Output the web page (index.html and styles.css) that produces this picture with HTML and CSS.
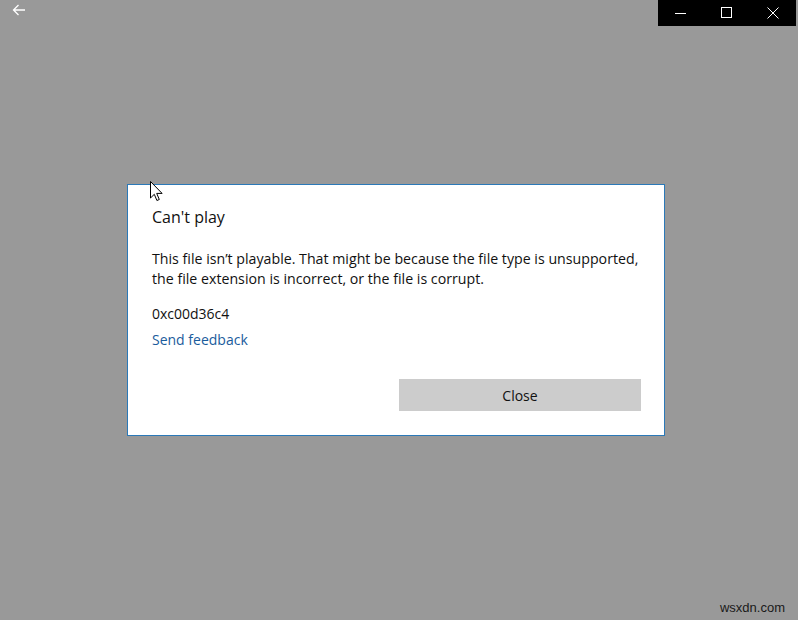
FILE: index.html
```html
<!DOCTYPE html>
<html lang="en">
<head>
    <meta charset="UTF-8">
    <title>Movies &amp; TV</title>
    <link rel="stylesheet" href="styles.css">
</head>
<body>

    <!-- Title bar -->
    <div class="titlebar">
        <button class="back-button" aria-label="Back">
            <svg width="16" height="16" viewBox="0 0 16 16"><path d="M14 8H2.5M7.5 3L2.5 8l5 5" fill="none" stroke="#fff" stroke-width="1.3"/></svg>
        </button>
        <div class="window-controls">
            <span class="control">
                <svg width="12" height="12" viewBox="0 0 12 12"><path d="M0 6.5h11" stroke="#fff" stroke-width="1"/></svg>
            </span>
            <span class="control">
                <svg width="12" height="12" viewBox="0 0 12 12"><rect x="0.5" y="0.5" width="10" height="10" fill="none" stroke="#fff" stroke-width="1"/></svg>
            </span>
            <span class="control">
                <svg width="12" height="12" viewBox="0 0 12 12"><path d="M0.5 0.5l11 11M11.5 0.5l-11 11" stroke="#fff" stroke-width="1"/></svg>
            </span>
        </div>
    </div>

    <div class="stage">
        <div class="dialog">
            <h1 class="dialog-title">Can't play</h1>
            <p class="dialog-text">This file isn’t playable. That might be because the file type is unsupported, the file extension is incorrect, or the file is corrupt.</p>
            <p class="error-code">0xc00d36c4</p>
            <a class="feedback-link" href="#">Send feedback</a>
            <div class="dialog-actions">
                <button class="close-button">Close</button>
            </div>
        </div>
    </div>

    <!-- mouse pointer -->
    <svg class="pointer" width="14" height="22" viewBox="0 0 14 22">
        <path d="M0.5 0.5v16.5l3.8-3.7 2.6 6.2 2.4-1-2.6-6.1h5.4z" fill="#fff" stroke="#000" stroke-width="1" stroke-linejoin="miter"/>
    </svg>

    <div class="watermark">wsxdn.com</div>

</body>
</html>
```

FILE: styles.css
```css
body {
    margin: 0;
    padding: 0;
    width: 798px;
    height: 620px;
    overflow: hidden;
    background-color: #999999;
    font-family: "Open Sans", "Noto Sans", sans-serif;
    color: #111;
    position: relative;
}
.titlebar {
    height: 26px;
    display: flex;
    justify-content: space-between;
}
.back-button {
    width: 40px;
    height: 20px;
    padding: 0 0 0 11px;
    border: none;
    background: none;
    display: flex;
    align-items: center;
}
.window-controls {
    display: flex;
    background-color: #000;
    width: 138px;
    margin-right: 2px;
}
.control {
    width: 46px;
    display: flex;
    align-items: center;
    justify-content: center;
}
.stage {
    padding: 158px 0 0 127px;
}
.dialog {
    width: 489px;
    background-color: #fff;
    border: 1px solid #2b79b8;
    padding: 20px 23px 24px 24px;
    display: flex;
    flex-direction: column;
}
.dialog-title {
    margin: 0;
    font-size: 16px;
    font-weight: normal;
    line-height: 24px;
}
.dialog-text {
    margin: 20px 0 0;
    font-size: 14.2px;
    line-height: 20px;
}
.error-code {
    margin: 15px 0 0;
    font-size: 14px;
    line-height: 20px;
}
.feedback-link {
    margin-top: 6px;
    font-size: 14px;
    line-height: 20px;
    color: #1a5c9c;
    text-decoration: none;
    align-self: flex-start;
}
.dialog-actions {
    margin-top: 29px;
    display: flex;
    justify-content: flex-end;
}
.close-button {
    width: 242px;
    height: 32px;
    border: none;
    background-color: #cccccc;
    font-family: inherit;
    font-size: 14px;
    color: #111;
}
.pointer {
    position: absolute;
    left: 150px;
    top: 181px;
}
.watermark {
    position: absolute;
    right: 13px;
    bottom: 5px;
    font-family: "Liberation Sans", Arial, sans-serif;
    font-size: 13px;
    color: #1a1a1a;
}
```
